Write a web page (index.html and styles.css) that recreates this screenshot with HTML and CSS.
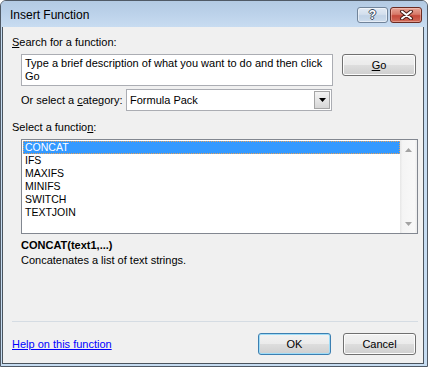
FILE: index.html
```html
<!DOCTYPE html>
<html lang="en">

<head>
    <meta charset="UTF-8">
    <meta name="viewport" content="width=device-width, initial-scale=1.0">
    <title>Insert Function</title>
    <link rel="stylesheet" href="styles.css">
</head>

<body>
    <div class="window">
        <!-- Title bar -->
        <div class="titlebar">
            <span class="title">Insert Function</span>
            <div class="captionButtons">
                <span class="capButton helpButton">?</span>
                <span class="capButton closeButton">
                    <svg width="15" height="10" viewBox="0 0 15 10">
                        <path d="M3 1.5 L12 8.5 M12 1.5 L3 8.5" stroke="#4a1d16" stroke-width="4" stroke-linecap="round" fill="none"/>
                        <path d="M3 1.5 L12 8.5 M12 1.5 L3 8.5" stroke="#ffffff" stroke-width="2" stroke-linecap="round" fill="none"/>
                    </svg>
                </span>
            </div>
        </div>

        <!-- Dialog body -->
        <div class="client">
            <div class="label"><u>S</u>earch for a function:</div>
            <div class="searchRow">
                <div class="searchBox">Type a brief description of what you want to do and then click<br>Go</div>
                <button class="btn goButton"><u>G</u>o</button>
            </div>
            <div class="categoryRow">
                <span class="categoryLabel">Or select a <u>c</u>ategory:</span>
                <div class="select">
                    <span class="selectValue">Formula Pack</span>
                    <span class="dropButton">
                        <svg width="7" height="4" viewBox="0 0 7 4"><path d="M0 0 H7 L3.5 4 Z" fill="#000"/></svg>
                    </span>
                </div>
            </div>
            <div class="label functionLabel">Select a functio<u>n</u>:</div>
            <div class="listbox">
                <ul class="items">
                    <li class="selected">CONCAT</li>
                    <li>IFS</li>
                    <li>MAXIFS</li>
                    <li>MINIFS</li>
                    <li>SWITCH</li>
                    <li>TEXTJOIN</li>
                </ul>
                <div class="scrollbar">
                    <svg width="7" height="4" viewBox="0 0 7 4"><path d="M3.5 0 L7 4 H0 Z" fill="#a3a3a3"/></svg>
                    <svg width="7" height="4" viewBox="0 0 7 4"><path d="M0 0 H7 L3.5 4 Z" fill="#a3a3a3"/></svg>
                </div>
            </div>
            <div class="signature">CONCAT(text1,...)</div>
            <div class="description">Concatenates a list of text strings.</div>
            <div class="spacer"></div>
            <div class="separator"></div>
            <div class="footer">
                <a href="#" class="helpLink">Help on this function</a>
                <div class="footerButtons">
                    <button class="btn defaultButton">OK</button>
                    <button class="btn">Cancel</button>
                </div>
            </div>
        </div>
    </div>
</body>

</html>
```

FILE: styles.css
```css
body {
    margin: 0;
    background: #fff;
    font-family: "Liberation Sans", Arial, sans-serif;
    font-size: 11px;
    color: #000;
}

.window {
    width: 428px;
    height: 367px;
    box-sizing: border-box;
    border: 1px solid #505a66;
    border-radius: 6px 6px 0 0;
    background: #c6dcf1;
    padding: 0 3px 2px 1px;
    display: flex;
    flex-direction: column;
}

.titlebar {
    height: 26px;
    margin: 0 -3px 0 -1px;
    border-radius: 5px 5px 0 0;
    background: linear-gradient(to bottom, #b3cae3 0%, #bcd2ea 50%, #c8dcf1 100%);
    display: flex;
    justify-content: space-between;
    align-items: flex-start;
}

.title {
    font-size: 12px;
    line-height: 16px;
    padding: 6px 0 0 9px;
}

.captionButtons {
    display: flex;
    gap: 2px;
    margin: 6px 5px 0 0;
}

.capButton {
    height: 16px;
    box-sizing: border-box;
    border-radius: 3px;
    display: flex;
    justify-content: center;
    align-items: center;
}

.helpButton {
    width: 31px;
    border: 1px solid #71849a;
    background: linear-gradient(to bottom, #e2eaf4 0%, #d3dfed 45%, #c1d2e6 55%, #cddcec 100%);
    box-shadow: inset 0 0 0 1px rgba(255, 255, 255, 0.5);
    color: #fff;
    font-weight: bold;
    font-size: 12px;
    line-height: 14px;
    text-shadow: 1px 0 #3b4c60, -1px 0 #3b4c60, 0 1px #3b4c60, 0 -1px #3b4c60;
}

.closeButton {
    width: 32px;
    border: 1px solid #6b2b22;
    background: linear-gradient(to bottom, #e8a597 0%, #d77a69 45%, #c5493a 55%, #d06c5a 100%);
    box-shadow: inset 0 0 0 1px rgba(255, 220, 210, 0.4);
}

.client {
    flex: 1;
    background: #f0f0f0;
    border: 1px solid #4a545e;
    border-top: none;
    display: flex;
    flex-direction: column;
    padding-bottom: 8px;
}

.label {
    line-height: 14px;
    margin: 8px 0 0 9px;
}

.searchRow {
    display: flex;
    gap: 9px;
    margin: 5px 0 0 18px;
    align-items: flex-start;
}

.searchBox {
    width: 312px;
    height: 32px;
    box-sizing: border-box;
    border: 1px solid #abadb3;
    background: #fff;
    padding: 2px 3px;
    line-height: 13px;
}

.btn {
    height: 22px;
    width: 73px;
    box-sizing: border-box;
    border: 1px solid #707070;
    border-radius: 3px;
    background: linear-gradient(to bottom, #f2f2f2 0%, #ebebeb 48%, #dddddd 52%, #cfcfcf 100%);
    box-shadow: inset 0 0 0 1px #fcfcfc;
    font-family: "Liberation Sans", Arial, sans-serif;
    font-size: 11px;
    color: #000;
    padding: 0;
}

.goButton {
    width: 74px;
}

.categoryRow {
    display: flex;
    align-items: center;
    margin: 3px 0 0 18px;
}

.categoryLabel {
    width: 105px;
    line-height: 13px;
}

.select {
    width: 206px;
    height: 22px;
    box-sizing: border-box;
    border: 1px solid #abadb3;
    background: #fff;
    display: flex;
    align-items: center;
    justify-content: space-between;
    padding: 1px;
}

.selectValue {
    padding-left: 2px;
    line-height: 13px;
}

.dropButton {
    width: 16px;
    height: 18px;
    box-sizing: border-box;
    border: 1px solid #a5a5a5;
    background: linear-gradient(to bottom, #f3f3f3 0%, #e6e6e6 50%, #d6d6d6 100%);
    display: flex;
    justify-content: center;
    align-items: center;
}

.functionLabel {
    margin-top: 9px;
}

.listbox {
    width: 397px;
    height: 95px;
    box-sizing: border-box;
    margin: 5px 0 0 18px;
    border: 1px solid #828790;
    background: #fff;
    display: flex;
}

.items {
    flex: 1;
    list-style: none;
    margin: 0;
    padding: 1px 0 0 1px;
}

.items li {
    height: 13px;
    line-height: 13px;
    padding-left: 2px;
    font-size: 10.5px;
}

.items li.selected {
    background: #3399ff;
    color: #fff;
    outline: 1px dotted #e6a15a;
    outline-offset: -1px;
}

.scrollbar {
    width: 17px;
    background: linear-gradient(to right, #e6e6e6 0%, #f4f4f4 15%, #f8f8f8 85%, #ebebeb 100%);
    display: flex;
    flex-direction: column;
    justify-content: space-between;
    align-items: center;
    padding: 8px 0 7px;
    box-sizing: border-box;
}

.signature {
    font-weight: bold;
    line-height: 14px;
    margin: 4px 0 0 18px;
}

.description {
    line-height: 14px;
    margin: 1px 0 0 18px;
}

.spacer {
    flex: 1;
}

.separator {
    height: 1px;
    background: #d5dce3;
    margin: 0 5px 11px 9px;
}

.footer {
    display: flex;
    justify-content: space-between;
    align-items: center;
    margin: 0 7px 0 9px;
}

.helpLink {
    color: #0000ff;
    text-decoration: underline;
    line-height: 14px;
}

.footerButtons {
    display: flex;
    gap: 12px;
}

.defaultButton {
    border-color: #3c7fb1;
    box-shadow: inset 0 0 0 1px #9fdcf7;
}
```
